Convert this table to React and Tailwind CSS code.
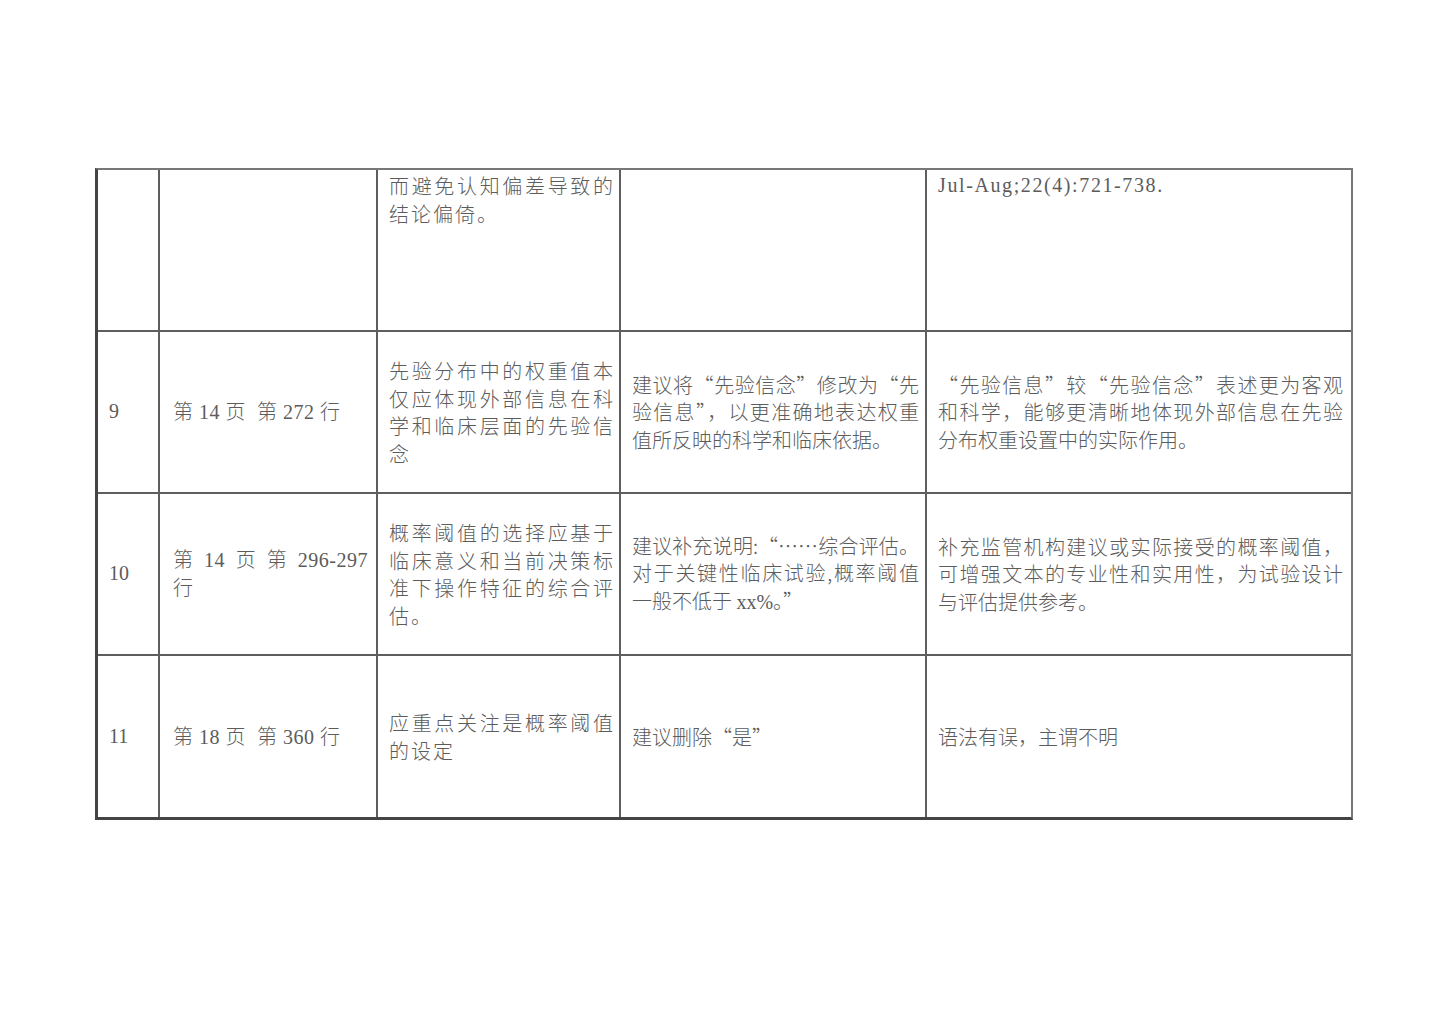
const rows = [
  {
    no: "",
    place: null,
    top: true,
    text: ["而避免认知偏差导致的", "结论偏倚。"],
    advice: [],
    reason: [],
    ref: "Jul-Aug;22(4):721-738.",
  },
  {
    no: "9",
    place: ["第 14 页\u00a0 第 272 行"],
    text: ["先验分布中的权重值本", "仅应体现外部信息在科", "学和临床层面的先验信", "念"],
    advice: ["建议将“先验信念”修改为“先", "验信息”，以更准确地表达权重", "值所反映的科学和临床依据。"],
    reason: ["“先验信息”较“先验信念”表述更为客观", "和科学，能够更清晰地体现外部信息在先验", "分布权重设置中的实际作用。"],
  },
  {
    no: "10",
    place: ["第 14 页 第 296-297", "行"],
    text: ["概率阈值的选择应基于", "临床意义和当前决策标", "准下操作特征的综合评", "估。"],
    advice: [
      "建议补充说明:“……综合评估。",
      "对于关键性临床试验,概率阈值",
      <>一般不低于 <span className="font-['Liberation_Serif',serif]">xx%</span>。”</>,
    ],
    reason: ["补充监管机构建议或实际接受的概率阈值，", "可增强文本的专业性和实用性，为试验设计", "与评估提供参考。"],
  },
  {
    no: "11",
    place: ["第 18 页\u00a0 第 360 行"],
    text: ["应重点关注是概率阈值", "的设定"],
    advice: ["建议删除“是”"],
    reason: ["语法有误，主谓不明"],
  },
];

const Lines = ({ lines, className = "" }) => (
  <div className={className}>
    {lines.map((line, i) => (
      <div
        key={i}
        className={
          i < lines.length - 1
            ? "text-justify [text-align-last:justify]"
            : ""
        }
      >
        {line}
      </div>
    ))}
  </div>
);

const cjk = "font-['Noto_Sans_CJK_SC','Liberation_Serif',sans-serif] font-light";
const serif = "font-['Liberation_Serif','Noto_Sans_CJK_SC',serif] font-light";

const App = () => {
  return (
    <div className="min-h-[1030px] w-full bg-white pl-[95px] pt-[168px]">
      <div className="grid w-[1258px] grid-cols-[62px_218px_243px_306px_424px] border-t-2 border-r-2 border-b-[3px] border-l-[3px] border-t-[#777] border-r-[#777] border-b-[#444] border-l-[#444] text-[#5c5c5c]">
        {rows.map((row, r) => {
          const last = r === rows.length - 1;
          const rowH = last ? "h-[161px]" : "h-[162px] border-b-2";
          const align = row.top ? "items-start pt-[2px]" : "items-center";
          return (
            <div key={r} className="contents">
              <div className={`flex ${rowH} ${align} border-r-2 border-[#5e5e5e] pl-[11px] ${serif} text-[20px] leading-[27.5px]`}>
                {row.no}
              </div>

              <div className={`flex ${rowH} ${align} border-r-2 border-[#5e5e5e] pl-[13px] pr-[8px] ${serif} text-[20px] leading-[28px] tracking-[0.5px]`}>
                {row.place && (
                  <div className="w-full">
                    {row.place.length > 1 ? (
                      <>
                        <div className="flex justify-between">
                          <span>第</span>
                          <span>14</span>
                          <span>页</span>
                          <span>第</span>
                          <span>296-297</span>
                        </div>
                        <div>{row.place[1]}</div>
                      </>
                    ) : (
                      <div className="whitespace-pre">{row.place[0]}</div>
                    )}
                  </div>
                )}
              </div>

              <div className={`flex ${rowH} ${align} border-r-2 border-[#5e5e5e] pl-[11px] pr-[4px] ${cjk} text-[20px] leading-[27.5px] tracking-[2px]`}>
                <Lines lines={row.text} className="w-full" />
              </div>

              <div className={`flex ${rowH} ${align} border-r-2 border-[#5e5e5e] pl-[11px] pr-[6px] ${cjk} text-[20px] leading-[27.5px]`}>
                <Lines lines={row.advice} className="w-full" />
              </div>

              <div className={`flex ${rowH} ${align} border-[#5e5e5e] pl-[11px] pr-[8px] ${cjk} text-[20px] leading-[27.5px]`}>
                {row.ref ? (
                  <div className="font-['Liberation_Serif',serif] text-[20px] leading-[27.5px] tracking-[1.6px]">
                    {row.ref}
                  </div>
                ) : (
                  <Lines lines={row.reason} className="w-full" />
                )}
              </div>
            </div>
          );
        })}
      </div>
    </div>
  );
};

export default App;
